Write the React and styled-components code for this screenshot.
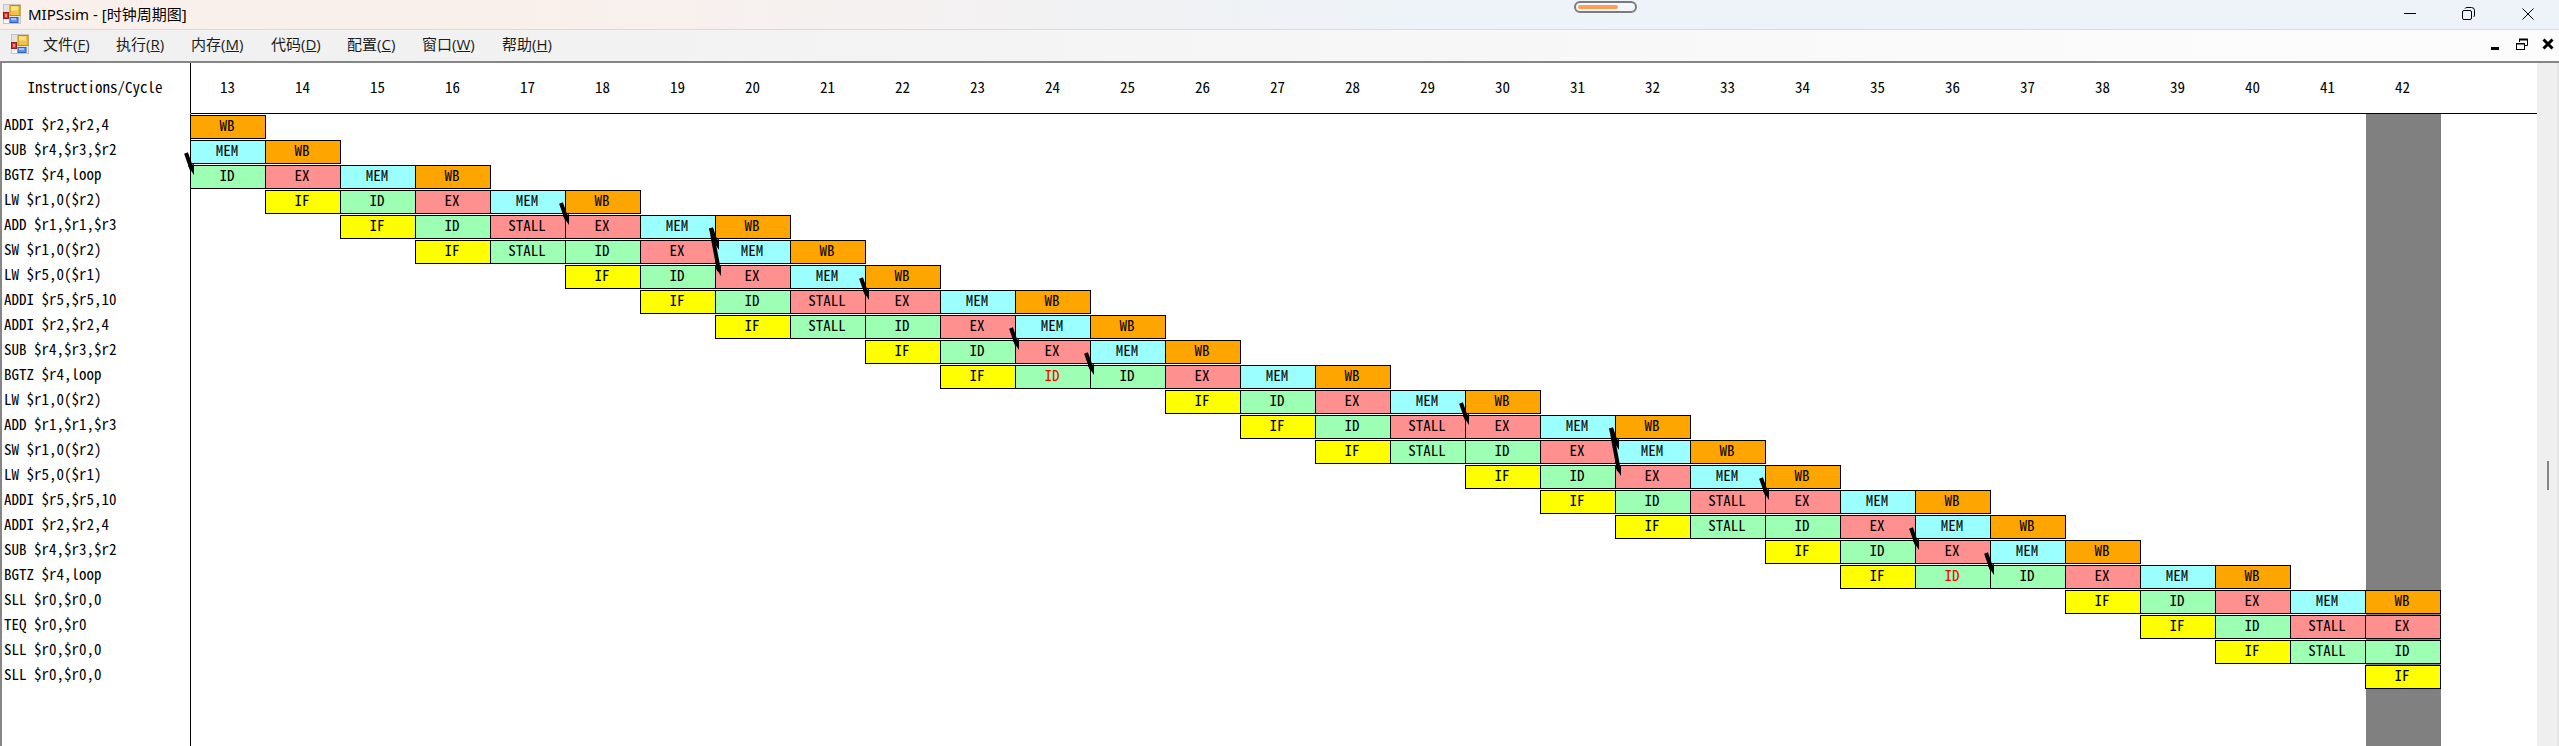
import React from "react";
import styled, { createGlobalStyle } from "styled-components";

const GlobalStyle = createGlobalStyle`
  * { box-sizing: border-box; }
  body { margin: 0; background: #fff; color: #000; font-family: "Open Sans", "Noto Sans CJK SC", sans-serif; }
`;

const Window = styled.div`
  min-height: 100vh;
  display: flex;
  flex-direction: column;
`;

const TitleBar = styled.header`
  display: flex;
  justify-content: space-between;
  height: 30px;
  padding: 0 24px 2px 3px;
  border-bottom: 1px solid #d9dadb;
  background: linear-gradient(90deg, #faf0eb 0%, #faf0eb 20%, #edf3f8 55%, #edf3f8 100%);
`;

const Side = styled.div`
  flex: 1;
  display: flex;
  align-items: center;
  justify-content: ${(p) => (p.$end ? "flex-end" : "flex-start")};
  gap: ${(p) => (p.$end ? "44px" : "7px")};
`;

const Title = styled.h1`
  margin: 0;
  font-size: 15px;
  font-weight: 400;
  line-height: 28px;
  font-family: "Noto Sans", "Noto Sans CJK SC", sans-serif;
`;

const Grip = styled.div`
  flex: 0 0 63px;
  height: 12px;
  margin: 1px 0 0 672px;
  padding: 2px;
  border: 2px solid #7a7d80;
  border-radius: 6px;
  background: #f4f6f8;
`;

const GripFill = styled.div`
  width: 40px;
  height: 4px;
  border-radius: 2px;
  background: #ff9f57;
`;

const IconButton = styled.button`
  display: flex;
  align-items: center;
  justify-content: center;
  width: 15px;
  height: 15px;
  padding: 0;
  border: 0;
  background: none;
  color: #000;
`;

const MenuBar = styled.nav`
  display: flex;
  align-items: center;
  justify-content: space-between;
  height: 31px;
  padding: 0 4px 3px 11px;
  background: linear-gradient(90deg, #f0f0f0 0%, #f2f2f2 25%, #fcfcfc 90%);
`;

const Menus = styled.div`
  display: flex;
  align-items: center;
  gap: ${(p) => p.$gap}px;
`;

const MenuList = styled.div`
  display: flex;
  margin-left: 2px;
`;

const MenuButton = styled.button`
  width: ${(p) => p.$width}px;
  padding: 0 0 0 12px;
  border: 0;
  background: none;
  text-align: left;
  white-space: nowrap;
  color: #1c1c1c;
  font: 15px/28px "Open Sans", "Noto Sans CJK SC", sans-serif;
`;

const Workspace = styled.main`
  flex: 1;
  display: flex;
  border-top: 2px solid #868686;
  border-left: 2px solid #868686;
  background: #fff;
`;

const Chart = styled.table`
  flex: 1;
  table-layout: fixed;
  border-collapse: separate;
  border-spacing: 0;
  font: 15px/18px "Noto Sans CJK SC", monospace;
  font-feature-settings: "hwid";
`;

const Head = styled.th`
  height: 51px;
  padding: 0 2px 2px 0;
  border-bottom: 1px solid #000;
  font-weight: 400;
  text-align: center;
`;

const NameHead = styled(Head)`
  border-bottom-color: transparent;
  border-right: 1px solid #000;
`;

const Name = styled.th`
  height: 25px;
  padding: 1px 0 0 2px;
  border-right: 1px solid #000;
  font-weight: 400;
  text-align: left;
  vertical-align: top;
  white-space: pre;
`;

const NameTail = styled.td`
  border-right: 1px solid #000;
`;

const Slot = styled.td`
  position: relative;
  padding: 1px 0 0;
  vertical-align: top;
  background: ${(p) => (p.$current ? "#808080" : "transparent")};
`;

const FILLS = {
  IF: "#ffff00",
  ID: "#9cffb4",
  EX: "#ff9090",
  MEM: "#9cffff",
  WB: "#ffa500",
};

const Stage = styled.div`
  width: 76px;
  height: 24px;
  margin-left: -1px;
  padding-right: 2px;
  border: 1px solid #000;
  background: ${(p) => FILLS[p.$unit]};
  color: ${(p) => (p.$alert ? "#ff0000" : "#000")};
  text-align: center;
`;

const Forward = styled.svg`
  position: absolute;
  z-index: 1;
  top: 14px;
  left: -7px;
  overflow: visible;
  pointer-events: none;
`;

const Gutter = styled.aside`
  display: flex;
  align-items: center;
  flex: 0 0 22px;
  padding: 0 0 0 10px;
  border-right: 2px solid #e6e6e6;
  background: #efefef;
`;

const Thumb = styled.div`
  width: 2px;
  height: 29px;
  margin-top: 142px;
  background: #858585;
`;

const FIRST = 13;
const LAST = 42;
const cycles = Array.from({ length: LAST - FIRST + 1 }, (_, i) => FIRST + i);

const FULL = ["IF", "ID", "EX", "MEM", "WB"];
const STALL_EX = ["IF", "ID", "STALL:EX", "EX", "MEM", "WB"];
const STALL_ID = ["IF", "STALL:ID", "ID", "EX", "MEM", "WB"];
const BRANCH = ["IF", "ID!", "ID", "EX", "MEM", "WB"];

/* forwards: [cycle the value is consumed in, number of rows the arrow spans] */
const rows = [
  { name: "ADDI $r2,$r2,4", start: 13, stages: ["WB"] },
  { name: "SUB $r4,$r3,$r2", start: 13, stages: ["MEM", "WB"], forwards: [[13, 1]] },
  { name: "BGTZ $r4,loop", start: 13, stages: ["ID", "EX", "MEM", "WB"] },
  { name: "LW $r1,0($r2)", start: 14, stages: FULL, forwards: [[18, 1]] },
  { name: "ADD $r1,$r1,$r3", start: 15, stages: STALL_EX, forwards: [[20, 1], [20, 2]] },
  { name: "SW $r1,0($r2)", start: 16, stages: STALL_ID },
  { name: "LW $r5,0($r1)", start: 18, stages: FULL, forwards: [[22, 1]] },
  { name: "ADDI $r5,$r5,10", start: 19, stages: STALL_EX },
  { name: "ADDI $r2,$r2,4", start: 20, stages: STALL_ID, forwards: [[24, 1]] },
  { name: "SUB $r4,$r3,$r2", start: 22, stages: FULL, forwards: [[25, 1]] },
  { name: "BGTZ $r4,loop", start: 23, stages: BRANCH },
  { name: "LW $r1,0($r2)", start: 26, stages: FULL, forwards: [[30, 1]] },
  { name: "ADD $r1,$r1,$r3", start: 27, stages: STALL_EX, forwards: [[32, 1], [32, 2]] },
  { name: "SW $r1,0($r2)", start: 28, stages: STALL_ID },
  { name: "LW $r5,0($r1)", start: 30, stages: FULL, forwards: [[34, 1]] },
  { name: "ADDI $r5,$r5,10", start: 31, stages: STALL_EX },
  { name: "ADDI $r2,$r2,4", start: 32, stages: STALL_ID, forwards: [[36, 1]] },
  { name: "SUB $r4,$r3,$r2", start: 34, stages: FULL, forwards: [[37, 1]] },
  { name: "BGTZ $r4,loop", start: 35, stages: BRANCH },
  { name: "SLL $r0,$r0,0", start: 38, stages: FULL },
  { name: "TEQ $r0,$r0", start: 39, stages: ["IF", "ID", "STALL:EX", "EX"] },
  { name: "SLL $r0,$r0,0", start: 40, stages: ["IF", "STALL:ID", "ID"] },
  { name: "SLL $r0,$r0,0", start: 42, stages: ["IF"] },
];

const menus = [
  ["文件", "F", 73],
  ["执行", "R", 75],
  ["内存", "M", 80],
  ["代码", "D", 76],
  ["配置", "C", 75],
  ["窗口", "W", 80],
  ["帮助", "H", 75],
];

function AppIcon() {
  return (
    <svg width="18" height="20" viewBox="0 0 18 20" aria-hidden="true">
      <rect x="0.5" y="0.5" width="17" height="19" fill="#e3e3e3" stroke="#c4c4c4" />
      <rect x="1" y="14" width="5" height="5" fill="#fafafa" />
      <rect x="7" y="1.5" width="10" height="10" fill="#f5c33b" stroke="#b98a1c" />
      <rect x="8" y="2.5" width="7" height="4" fill="#ffe48a" />
      <rect x="0.5" y="8.5" width="5" height="6" fill="#d8382c" stroke="#9c1c14" />
      <rect x="2" y="10" width="2" height="3" fill="#f28b80" />
      <rect x="7" y="13.5" width="8" height="5" fill="#5b93ee" stroke="#2f62bd" />
      <rect x="8" y="14" width="5" height="2" fill="#a5c6fb" />
    </svg>
  );
}

function Arrow({ span }) {
  const x = span === 1 ? 10 : 12;
  const y = span === 1 ? 22 : 48;
  return (
    <Forward width="14" height={y} aria-hidden="true">
      <path d={`M2 0L${x - 2} ${y - 5}`} stroke="#000" strokeWidth="4" fill="none" />
      <path d={`M${x} ${y}L${x - 6} ${y - 9}L${x} ${y - 11}Z`} fill="#000" />
    </Forward>
  );
}

function Cell({ row, cycle }) {
  const stage = row.stages[cycle - row.start];
  const [label, unit] = stage ? stage.replace("!", "").split(":") : [];
  const arrows = (row.forwards || []).filter(([at]) => at === cycle);
  return (
    <Slot $current={cycle === LAST}>
      {stage && (
        <Stage $unit={unit || label} $alert={stage.endsWith("!")}>
          {label}
        </Stage>
      )}
      {arrows.map(([, span]) => (
        <Arrow key={span} span={span} />
      ))}
    </Slot>
  );
}

export default function App() {
  return (
    <>
      <GlobalStyle />
      <Window>
        <TitleBar>
          <Side>
            <AppIcon />
            <Title>MIPSsim - [时钟周期图]</Title>
          </Side>
          <Grip>
            <GripFill />
          </Grip>
          <Side $end>
            <IconButton aria-label="最小化">
              <svg width="12" height="12"><path d="M0 5.5H12" stroke="#000" /></svg>
            </IconButton>
            <IconButton aria-label="还原">
              <svg width="13" height="13" fill="none" stroke="#000">
                <rect x="0.5" y="3.5" width="9" height="9" rx="1.5" />
                <path d="M3 1.5Q3.5 0.5 5 0.5H9.5Q12.5 0.5 12.5 3.5V8Q12.5 9.5 11.5 10" />
              </svg>
            </IconButton>
            <IconButton aria-label="关闭">
              <svg width="12" height="12"><path d="M0.5 0.5L11.5 11.5M11.5 0.5L0.5 11.5" stroke="#000" /></svg>
            </IconButton>
          </Side>
        </TitleBar>
        <MenuBar>
          <Menus $gap={0}>
            <AppIcon />
            <MenuList>
              {menus.map(([label, key, width]) => (
                <MenuButton key={key} $width={width}>
                  {label}(<u>{key}</u>)
                </MenuButton>
              ))}
            </MenuList>
          </Menus>
          <Menus $gap={11}>
            <IconButton aria-label="最小化子窗口">
              <svg width="12" height="12"><rect x="1" y="9" width="8" height="3" /></svg>
            </IconButton>
            <IconButton aria-label="还原子窗口">
              <svg width="12" height="12" fill="none" stroke="#000">
                <path d="M3.5 4V1.5H11.5V7.5H9M3 1H12" />
                <path d="M3 2H12M0 6H9" />
                <rect x="0.5" y="5.5" width="8" height="6" />
              </svg>
            </IconButton>
            <IconButton aria-label="关闭子窗口">
              <svg width="12" height="12"><path d="M1.5 1.5L10.5 10.5M10.5 1.5L1.5 10.5" stroke="#000" strokeWidth="3" /></svg>
            </IconButton>
          </Menus>
        </MenuBar>
        <Workspace>
          <Chart>
            <colgroup>
              <col style={{ width: 189 }} />
              {cycles.map((c) => (
                <col key={c} style={{ width: 75 }} />
              ))}
              <col />
            </colgroup>
            <thead>
              <tr>
                <NameHead scope="col">Instructions/Cycle</NameHead>
                {cycles.map((c) => (
                  <Head key={c} scope="col">{c}</Head>
                ))}
                <Head as="td" />
              </tr>
            </thead>
            <tbody>
              {rows.map((row, i) => (
                <tr key={i}>
                  <Name scope="row">{row.name}</Name>
                  {cycles.map((c) => (
                    <Cell key={c} row={row} cycle={c} />
                  ))}
                  <td />
                </tr>
              ))}
              <tr>
                <NameTail />
                {cycles.map((c) => (
                  <Slot key={c} $current={c === LAST} />
                ))}
                <td />
              </tr>
            </tbody>
          </Chart>
          <Gutter>
            <Thumb />
          </Gutter>
        </Workspace>
      </Window>
    </>
  );
}
